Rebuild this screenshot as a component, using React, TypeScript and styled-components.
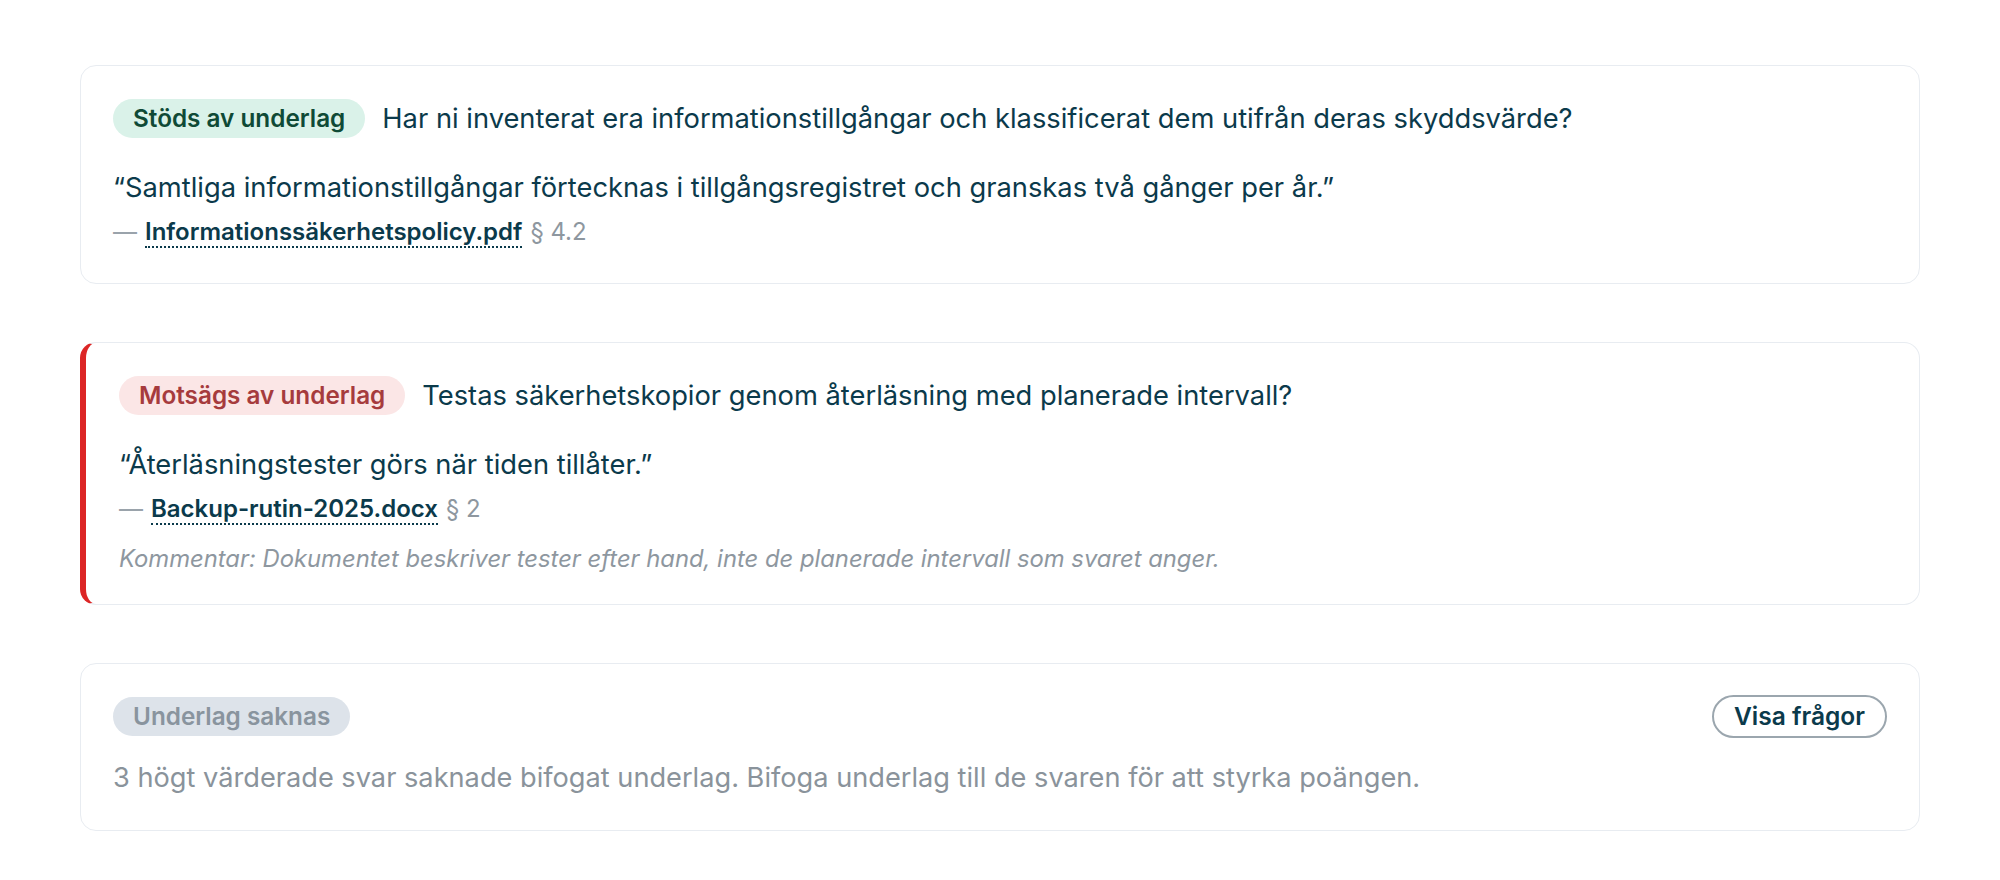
import styled, { createGlobalStyle } from "styled-components";

type Tone = "supported" | "contradicted" | "missing";

interface Evidence {
  tone: Tone;
  label: string;
  question: string;
  quote: string;
  file: string;
  section: string;
  comment?: string;
}

const items: Evidence[] = [
  {
    tone: "supported",
    label: "Stöds av underlag",
    question:
      "Har ni inventerat era informationstillgångar och klassificerat dem utifrån deras skyddsvärde?",
    quote:
      "“Samtliga informationstillgångar förtecknas i tillgångsregistret och granskas två gånger per år.”",
    file: "Informationssäkerhetspolicy.pdf",
    section: "§ 4.2",
  },
  {
    tone: "contradicted",
    label: "Motsägs av underlag",
    question: "Testas säkerhetskopior genom återläsning med planerade intervall?",
    quote: "“Återläsningstester görs när tiden tillåter.”",
    file: "Backup-rutin-2025.docx",
    section: "§ 2",
    comment:
      "Kommentar: Dokumentet beskriver tester efter hand, inte de planerade intervall som svaret anger.",
  },
];

const badgeColors: Record<Tone, { bg: string; fg: string }> = {
  supported: { bg: "#daf2e9", fg: "#0f4a36" },
  contradicted: { bg: "#fbe6e6", fg: "#a63b3d" },
  missing: { bg: "#dde3ea", fg: "#89949e" },
};

const App = () => {
  return (
    <>
      <GlobalStyle />
      <Page>
        {items.map((item) => (
          <Card
            key={item.label}
            $flagged={item.tone === "contradicted"}
            $bottom={item.comment ? 30 : 35}
          >
            <Header>
              <Badge $tone={item.tone}>{item.label}</Badge>
              <Question>{item.question}</Question>
            </Header>
            <Quote>{item.quote}</Quote>
            <Source>
              <Dash>—</Dash>
              <FileLink>{item.file}</FileLink>
              <Section>{item.section}</Section>
            </Source>
            {item.comment && <Comment>{item.comment}</Comment>}
          </Card>
        ))}
        <Card $bottom={35}>
          <Header $spread>
            <Badge $tone="missing">Underlag saknas</Badge>
            <OutlineButton>Visa frågor</OutlineButton>
          </Header>
          <Note>
            3 högt värderade svar saknade bifogat underlag. Bifoga underlag till de svaren för att
            styrka poängen.
          </Note>
        </Card>
      </Page>
    </>
  );
};

export default App;

const GlobalStyle = createGlobalStyle`
  body {
    margin: 0;
    background: #ffffff;
    font-family: Inter, "Noto Sans", sans-serif;
    color: #0b3a4b;
  }
`;

const Page = styled.div`
  display: flex;
  flex-direction: column;
  gap: 58px;
  width: 1840px;
  margin: 0 auto;
  padding-top: 65px;
`;

const Card = styled.div<{ $flagged?: boolean; $bottom: number }>`
  display: flex;
  flex-direction: column;
  border: 1.5px solid #e8ecf1;
  border-left: ${(p) => (p.$flagged ? "6px solid #dc2626" : "1.5px solid #e8ecf1")};
  border-radius: 16px;
  padding: 32px ${(p) => (p.$flagged ? "34px" : "32px")} ${(p) => p.$bottom}px
    ${(p) => (p.$flagged ? "33px" : "32px")};
  background: #fff;
`;

const Header = styled.div<{ $spread?: boolean }>`
  display: flex;
  align-items: center;
  gap: 17px;
  justify-content: ${(p) => (p.$spread ? "space-between" : "flex-start")};
  height: 40px;
`;

const Badge = styled.span<{ $tone: Tone }>`
  display: inline-flex;
  align-items: center;
  height: 39px;
  padding: 0 20px;
  border-radius: 999px;
  font-size: 24.3px;
  font-weight: 600;
  background: ${(p) => badgeColors[p.$tone].bg};
  color: ${(p) => badgeColors[p.$tone].fg};
  white-space: nowrap;
`;

const Question = styled.span`
  font-size: 27.3px;
  line-height: 36px;
  padding-top: 1px;
  color: #0b3a4b;
`;

const Quote = styled.p`
  margin: 32px 0 0;
  font-size: 27.3px;
  line-height: 36px;
  color: #0b3a4b;
`;

const Source = styled.div`
  display: flex;
  align-items: baseline;
  gap: 8px;
  margin-top: 10px;
  font-size: 24px;
  line-height: 32px;
`;

const Dash = styled.span`
  color: #9aa3ab;
`;

const FileLink = styled.span`
  font-weight: 600;
  color: #0b3a4b;
  border-bottom: 2px dotted #0b3a4b;
  line-height: 28px;
`;

const Section = styled.span`
  color: #8e979f;
`;

const Comment = styled.p`
  margin: 19px 0 0;
  font-size: 23.8px;
  line-height: 30px;
  font-style: italic;
  color: #8e979f;
`;

const OutlineButton = styled.button`
  height: 43px;
  padding: 0 20px;
  border: 2px solid #9ba6ae;
  border-radius: 999px;
  background: #fff;
  font-family: Inter, "Noto Sans", sans-serif;
  font-size: 24.5px;
  font-weight: 600;
  color: #0b3a4b;
  cursor: pointer;
`;

const Note = styled.p`
  margin: 24px 0 0;
  font-size: 27.2px;
  line-height: 35px;
  color: #8a939b;
`;
